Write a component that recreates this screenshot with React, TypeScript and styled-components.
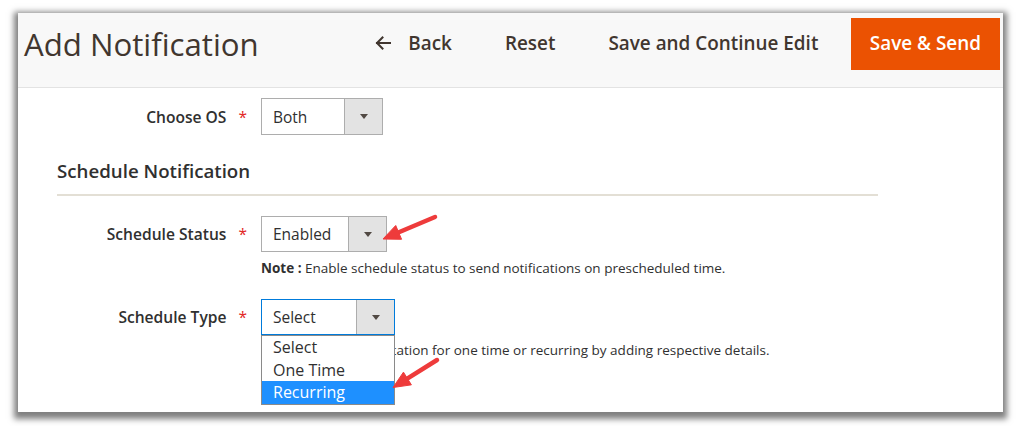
import React from 'react';
import styled, { createGlobalStyle } from 'styled-components';

const Global = createGlobalStyle`
  html, body { margin: 0; padding: 0; background: #fff; }
  body { font-family: 'Open Sans', 'Noto Sans', sans-serif; color: #303030; }
  * { box-sizing: border-box; }
`;

const Page = styled.div`
  width: 1023px;
  height: 426px;
  padding: 13px 20px 14px 18px;
`;

const Frame = styled.div`
  position: relative;
  width: 985px;
  height: 399px;
  background: #fff;
  overflow: hidden;
  box-shadow: 0 3px 6px 4px rgba(0, 0, 0, 0.5);
`;

const Header = styled.header`
  display: flex;
  align-items: center;
  height: 75px;
  padding: 5px 3px 17px 6px;
  background: #f8f8f8;
  border-bottom: 1px solid #e3e3e3;
`;

const Title = styled.h1`
  margin: 0;
  font-size: 31.2px;
  font-weight: 400;
  line-height: 1.1;
  color: #41362f;
`;

const Actions = styled.div`
  margin-left: auto;
  display: flex;
  align-items: center;
`;

const LinkButton = styled.button`
  display: flex;
  align-items: center;
  gap: 17px;
  height: 52px;
  padding: 0 26.5px 2px;
  border: 0;
  background: none;
  font-family: 'Open Sans', sans-serif;
  font-size: 18.9px;
  font-weight: 600;
  color: #41362f;
`;

const PrimaryButton = styled.button`
  height: 52px;
  margin-left: 6px;
  padding: 0 18px 2px;
  border: 1px solid #eb5202;
  background: #eb5202;
  font-family: 'Open Sans', sans-serif;
  font-size: 18.9px;
  font-weight: 600;
  color: #fff;
`;

const Form = styled.div`
  padding-top: 10px;
`;

const Field = styled.div<{ $mt: number }>`
  display: grid;
  grid-template-columns: 243px auto;
  align-items: start;
  margin-top: ${(p) => p.$mt}px;
`;

const Label = styled.label<{ $h: number }>`
  display: flex;
  justify-content: flex-end;
  align-items: center;
  height: ${(p) => p.$h}px;
  padding-right: 14px;
  font-size: 15.6px;
  font-weight: 600;
  color: #303030;
  &::after {
    content: '*';
    margin-left: 12px;
    color: #e22626;
    font-size: 15.5px;
    font-weight: 400;
  }
`;

const Control = styled.div`
  position: relative;
`;

const Select = styled.div<{ $w: number; $h: number; $focus?: boolean }>`
  display: flex;
  width: ${(p) => p.$w}px;
  height: ${(p) => p.$h}px;
  border: 1px solid ${(p) => (p.$focus ? '#007bdb' : '#adadad')};
  background: #fff;
`;

const SelectValue = styled.span`
  flex: 1;
  display: flex;
  align-items: center;
  padding-left: 11px;
  font-size: 15.5px;
  color: #303030;
`;

const SelectButton = styled.span`
  width: 38px;
  display: flex;
  align-items: center;
  justify-content: center;
  background: #e3e3e3;
  border-left: 1px solid #adadad;
  &::after {
    content: '';
    border-left: 4.5px solid transparent;
    border-right: 4.5px solid transparent;
    border-top: 5px solid #514943;
  }
`;

const Note = styled.div<{ $mt: number }>`
  margin-top: ${(p) => p.$mt}px;
  font-size: 13.5px;
  line-height: 18px;
  white-space: nowrap;
  color: #303030;
  b {
    font-weight: 700;
  }
`;

const Legend = styled.div`
  width: 821px;
  margin: 24px 0 0 39px;
  padding-bottom: 11px;
  border-bottom: 2px solid #e3dfd5;
  font-size: 18.7px;
  font-weight: 600;
  line-height: 24px;
  color: #303030;
`;

const Listbox = styled.ul<{ $w: number }>`
  position: absolute;
  top: 36px;
  left: 0;
  z-index: 2;
  width: ${(p) => p.$w}px;
  margin: 0;
  padding: 0;
  list-style: none;
  background: #fff;
  border: 1px solid #8a8a8a;
`;

const Option = styled.li<{ $active?: boolean }>`
  height: 22.67px;
  padding-left: 11px;
  font-size: 16px;
  line-height: 22px;
  background: ${(p) => (p.$active ? '#1e90ff' : 'transparent')};
  color: ${(p) => (p.$active ? '#fff' : '#303030')};
`;

const Annotations = styled.svg`
  position: absolute;
  inset: 0;
  z-index: 5;
  pointer-events: none;
`;

function Arrow({ x1, y1, x2, y2 }: { x1: number; y1: number; x2: number; y2: number }) {
  const dx = x2 - x1;
  const dy = y2 - y1;
  const len = Math.hypot(dx, dy);
  const ux = dx / len;
  const uy = dy / len;
  const hl = 17;
  const hw = 7.5;
  const bx = x2 - ux * hl;
  const by = y2 - uy * hl;
  const nx = -uy;
  const ny = ux;
  const pts = `${x2},${y2} ${bx + nx * hw},${by + ny * hw} ${bx - nx * hw},${by - ny * hw}`;
  return (
    <g>
      <line x1={x1} y1={y1} x2={bx + ux * 3} y2={by + uy * 3} stroke="#ee3b3b" strokeWidth={4.5} strokeLinecap="round" />
      <polygon points={pts} fill="#ee3b3b" stroke="#ee3b3b" strokeWidth={1} strokeLinejoin="round" />
    </g>
  );
}

const BackIcon = () => (
  <svg width="16" height="14" viewBox="0 0 16 14" fill="none" stroke="#41362f" strokeWidth="2" strokeLinecap="square">
    <path d="M2 7 H15" />
    <path d="M7.5 1.5 L2 7 L7.5 12.5" />
  </svg>
);

export default function App() {
  return (
    <>
      <Global />
      <Page>
        <Frame>
          <Header>
            <Title>Add Notification</Title>
            <Actions>
              <LinkButton>
                <BackIcon />
                Back
              </LinkButton>
              <LinkButton>Reset</LinkButton>
              <LinkButton>Save and Continue Edit</LinkButton>
              <PrimaryButton>Save &amp; Send</PrimaryButton>
            </Actions>
          </Header>
          <Form>
            <Field $mt={0}>
              <Label $h={37}>Choose OS</Label>
              <Control>
                <Select $w={122} $h={37}>
                  <SelectValue>Both</SelectValue>
                  <SelectButton />
                </Select>
              </Control>
            </Field>
            <Legend>Schedule Notification</Legend>
            <Field $mt={20}>
              <Label $h={36}>Schedule Status</Label>
              <Control>
                <Select $w={126} $h={36}>
                  <SelectValue>Enabled</SelectValue>
                  <SelectButton />
                </Select>
                <Note $mt={7}>
                  <b>Note :</b> Enable schedule status to send notifications on prescheduled time.
                </Note>
              </Control>
            </Field>
            <Field $mt={22}>
              <Label $h={36}>Schedule Type</Label>
              <Control>
                <Select $w={134} $h={36} $focus>
                  <SelectValue>Select</SelectValue>
                  <SelectButton />
                </Select>
                <Note $mt={6}>
                  <b>Note :</b> Select your rotation for one time or recurring by adding respective details.
                </Note>
                <Listbox $w={134}>
                  <Option>Select</Option>
                  <Option>One Time</Option>
                  <Option $active>Recurring</Option>
                </Listbox>
              </Control>
            </Field>
          </Form>
          <Annotations width={985} height={399} viewBox="0 0 985 399">
            <Arrow x1={417} y1={204} x2={365} y2={226} />
            <Arrow x1={419} y1={347} x2={375} y2={374.5} />
          </Annotations>
        </Frame>
      </Page>
    </>
  );
}
